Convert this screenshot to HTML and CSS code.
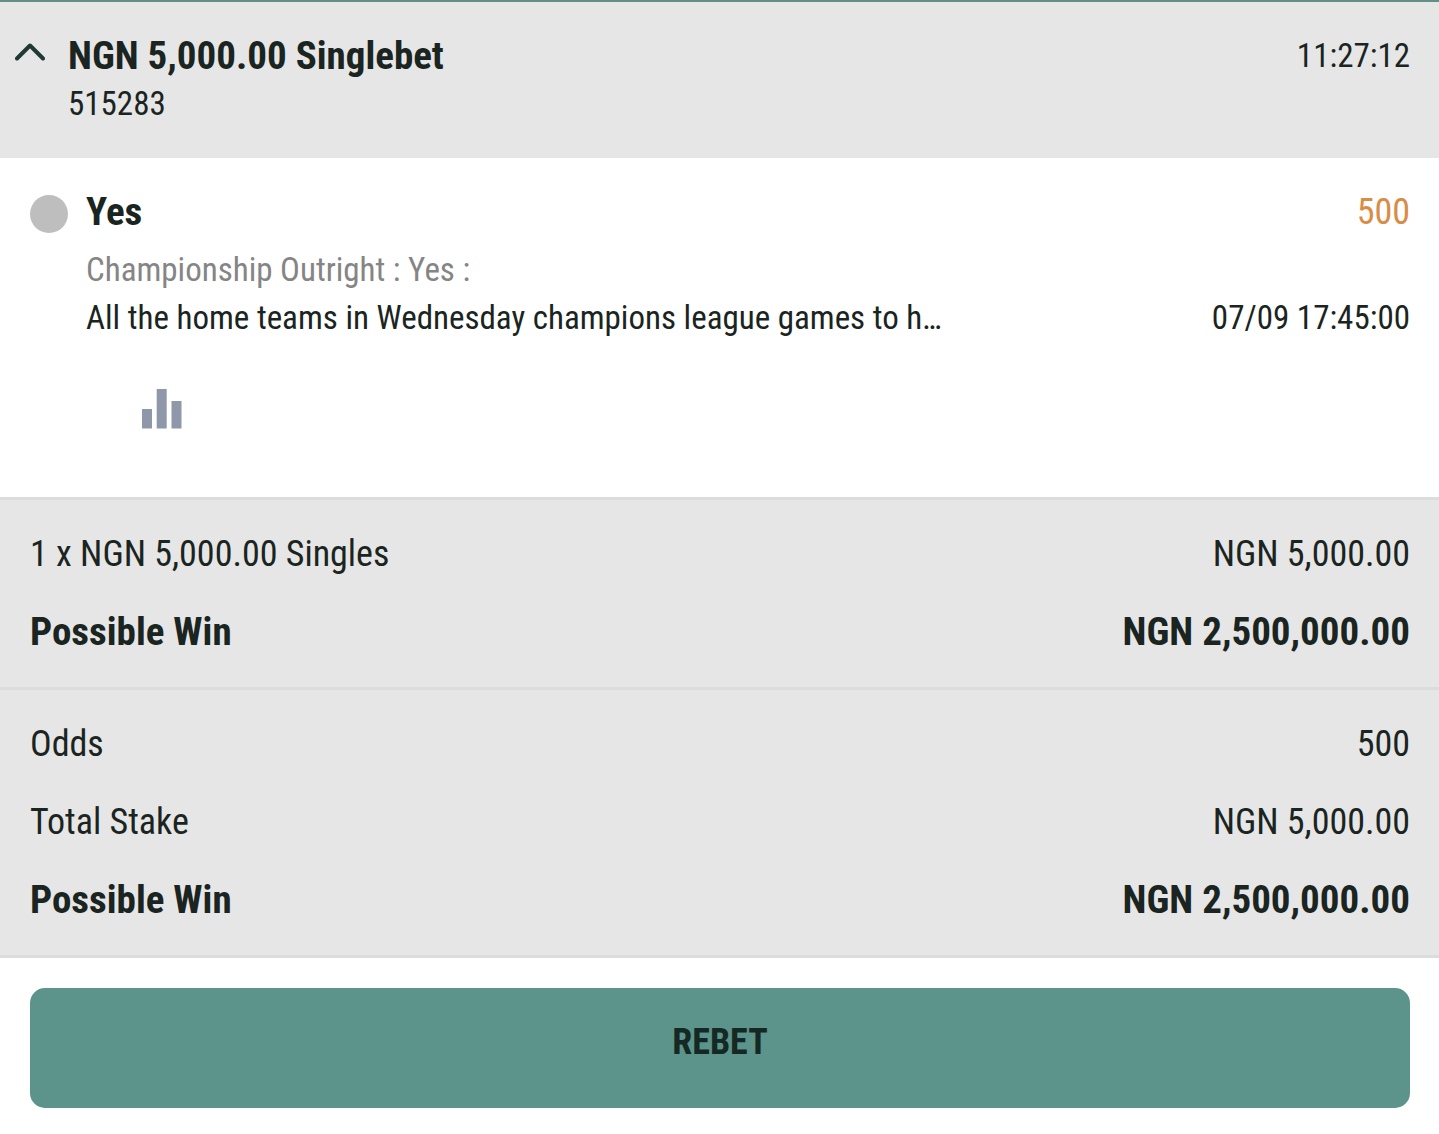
FILE: index.html
```html
<!DOCTYPE html>
<html lang="en">
<head>
  <meta charset="UTF-8">
  <meta name="viewport" content="width=device-width, initial-scale=1.0">

  <title>Singlebet 515283</title>

  <link rel="stylesheet" href="styles.css">
</head>
<body>
  <header class="bet-header">
    <button class="toggle" type="button" aria-label="Collapse bet" aria-expanded="true">
      <svg class="chevron" viewBox="0 0 30 18" aria-hidden="true">
        <path d="M2 15.5 L15 2.5 L28 15.5"/>
      </svg>
    </button>
    <div class="bet-title">
      <h1 class="strong">NGN 5,000.00 Singlebet</h1>
      <span class="small">515283</span>
    </div>
    <time class="bet-time small">11:27:12</time>
  </header>

  <main>
    <section class="selection">
      <span class="status"></span>
      <div class="details">
        <div class="line pick">
          <h2 class="strong">Yes</h2>
          <span class="odds">500</span>
        </div>
        <div class="line small market">Championship Outright : Yes :</div>
        <div class="line small">
          <span class="event">All the home teams in Wednesday champions league games to h…</span>
          <time>07/09 17:45:00</time>
        </div>
        <button class="stats" type="button" aria-label="Statistics">
          <svg class="bars" viewBox="0 0 40 40" aria-hidden="true">
            <rect x="0" y="20" width="10" height="19.5"/>
            <rect x="14.7" y="0" width="10" height="39.5"/>
            <rect x="29.5" y="12" width="10" height="27.5"/>
          </svg>
        </button>
      </div>
    </section>

    <dl class="totals">
      <div class="row"><dt>1 x NGN 5,000.00 Singles</dt><dd>NGN 5,000.00</dd></div>
      <div class="row strong"><dt>Possible Win</dt><dd>NGN 2,500,000.00</dd></div>
    </dl>

    <dl class="totals last">
      <div class="row"><dt>Odds</dt><dd>500</dd></div>
      <div class="row"><dt>Total Stake</dt><dd>NGN 5,000.00</dd></div>
      <div class="row strong"><dt>Possible Win</dt><dd>NGN 2,500,000.00</dd></div>
    </dl>

    <div class="actions">
      <button class="rebet" type="button">REBET</button>
    </div>
  </main>
</body>
</html>
```
FILE: styles.css
```css
body {
  margin: 0;
  background-color: #fff;
  color: #1a2421;
  font-family: "Roboto Condensed", Roboto, sans-serif;
  font-size: 36px;
  line-height: 48px;
}

h1, h2, dl, dd {
  margin: 0;
}

button {
  padding: 0;
  border: 0;
  background: none;
  color: inherit;
  font-family: inherit;
  cursor: pointer;
}

.strong {
  font-size: 39px;
  font-weight: bold;
}

.small {
  font-size: 33px;
}

/* header */
.bet-header {
  display: flex;
  align-items: flex-start;
  padding: 30px 29px 30px 15px;
  border-top: 2px solid #648f86;
  background-color: #e6e6e6;
}

.toggle {
  display: flex;
  align-items: center;
  width: 53px;
  height: 40px;
}

.chevron {
  width: 30px;
  height: 18px;
  fill: none;
  stroke: #1f3a34;
  stroke-width: 4;
  stroke-linecap: round;
  stroke-linejoin: round;
}

.bet-title {
  flex: 1;
  display: flex;
  flex-direction: column;
}

/* selection */
.selection {
  display: flex;
  gap: 18px;
  padding: 30px 29px 68px 30px;
}

.status {
  width: 38px;
  height: 38px;
  margin-top: 7px;
  border-radius: 50%;
  background-color: #bebebe;
}

.details {
  flex: 1;
}

.line {
  display: flex;
  justify-content: space-between;
}

.pick {
  margin-bottom: 10px;
}

.odds {
  color: #d98c45;
}

.market {
  color: #858585;
}

.stats {
  display: block;
  margin: 47px 0 0 56px;
}

.bars {
  display: block;
  width: 40px;
  height: 40px;
  fill: #8f98aa;
}

/* totals */
.totals {
  padding: 15px 29px 16px 30px;
  border-top: 3px solid #dcdcdc;
  background-color: #e6e6e6;
}

.last {
  border-bottom: 3px solid #dcdcdc;
}

.row {
  display: flex;
  justify-content: space-between;
  line-height: 78px;
}

.actions {
  padding: 30px 29px 26px 30px;
}

.rebet {
  width: 100%;
  height: 120px;
  padding-bottom: 12px;
  border-radius: 15px;
  background-color: #5c938a;
  color: #152924;
  font-size: 36px;
  font-weight: bold;
}
```
